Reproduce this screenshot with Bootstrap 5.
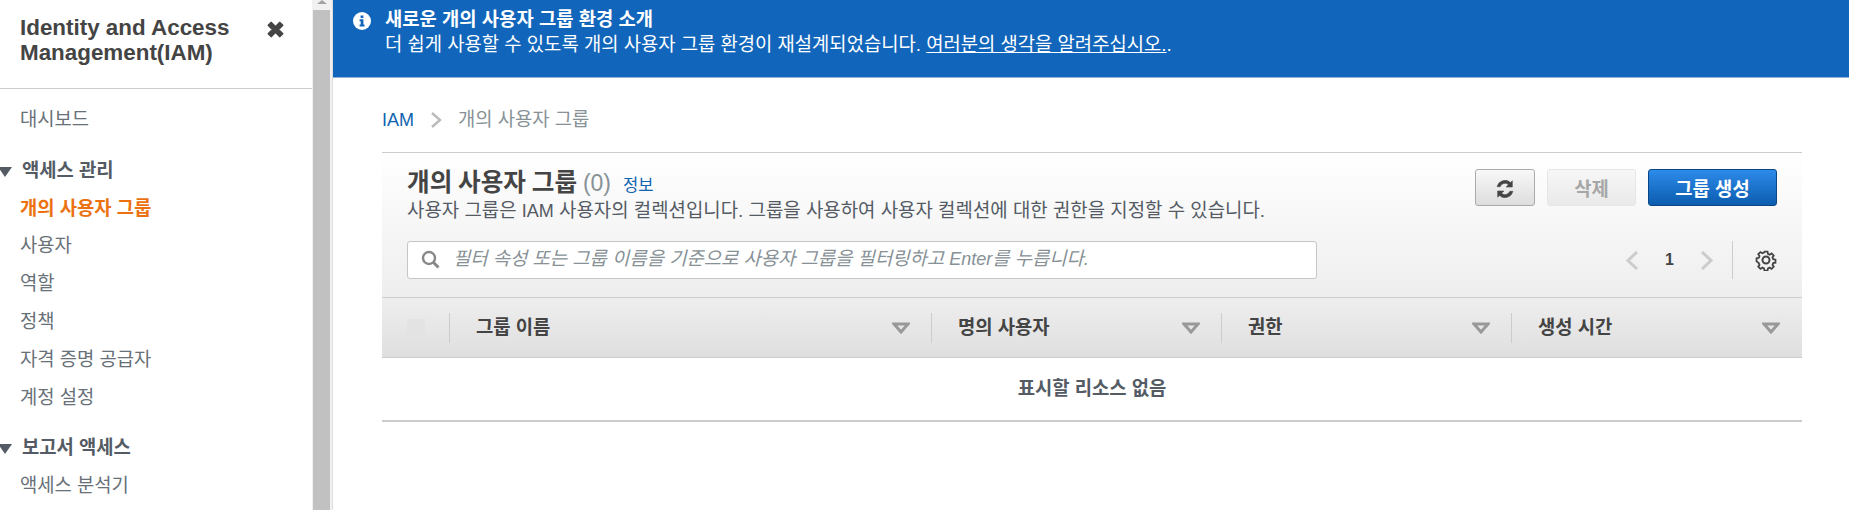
<!DOCTYPE html>
<html lang="ko">
<head>
    <meta charset="UTF-8">
    <meta name="viewport" content="width=device-width, initial-scale=1.0">
    <title>IAM - 개의 사용자 그룹</title>
    <link href="https://cdn.jsdelivr.net/npm/bootstrap@5.3.3/dist/css/bootstrap.min.css" rel="stylesheet">
    <script src="https://cdn.jsdelivr.net/npm/bootstrap@5.3.3/dist/js/bootstrap.bundle.min.js"></script>
    <style>
        html, body { height: 510px; overflow: hidden; }
        body { font-family: "Liberation Sans", "Noto Sans CJK KR", sans-serif; font-size: 18.8px; color: #444; background: #fff; }
        a { text-decoration: none; }
        .latin { font-size: 18px; }

        /* left nav */
        .side-nav { width: 312px; height: 510px; overflow: hidden; flex: none; }
        .side-head { height: 89px; border-bottom: 1px solid #ccc; padding: 15px 20px 0; }
        .side-title { font-size: 22.4px; line-height: 25px; font-weight: 700; color: #444; width: 240px; }
        .side-close { margin: 6px 8px 0 0; }
        .side-list { padding-top: 12px; }
        .side-item { height: 37.8px; line-height: 37.8px; padding-left: 20px; color: #687078; white-space: nowrap; }
        .side-item.on { color: #ec7211; font-weight: 700; }
        .side-group { height: 37.8px; color: #545b64; font-weight: 700; margin-top: 13px; gap: 8px; white-space: nowrap; }
        .side-tri { width: 0; height: 0; border-left: 7px solid transparent; border-right: 7px solid transparent; border-top: 10px solid #545b64; margin-left: -2px; margin-right: 2px; margin-top: 2px; }

        /* fake scrollbar */
        .scroll-track { width: 21px; flex: none; background: #f1f1f1; padding: 0 2px 0 1px; border-right: 1px solid #ddd; }
        .scroll-up { height: 10px; display: flex; justify-content: center; }
        .scroll-up i { width: 0; height: 0; border-left: 5px solid transparent; border-right: 5px solid transparent; border-bottom: 4px solid #a3a3a3; }
        .scroll-thumb { background: #c1c1c1; height: 500px; }

        /* main */
        .main-area { flex: 1 1 auto; min-width: 0; }
        .info-banner { height: 78px; background: #1166bb; border-bottom: 1px solid #8fb3d9; color: #fff; padding: 9px 0 0 20px; gap: 14px; }
        .info-banner svg { margin-top: 3px; }
        .info-banner strong { display: block; line-height: 22px; }
        .info-banner div div { line-height: 27px; }
        .info-banner a { color: #fff; text-decoration: underline; }
        .content-wrap { padding: 0 47px 0 49px; }
        .crumbs { height: 74px; gap: 16px; padding-top: 10px; color: #879196; }
        .crumbs a { color: #0f63b0; }

        .group-panel { border-top: 1px solid #ccc; }
        .panel-top { height: 145px; background: linear-gradient(#fff, #eee); padding: 16px 25px 0 25px; border-bottom: 1px solid #ccc; }
        .panel-title { font-size: 24.6px; font-weight: 700; line-height: 27px; color: #444; white-space: nowrap; word-spacing: -1px; }
        .panel-count { font-weight: 400; font-size: 23px; color: #879196; }
        .panel-info { font-size: 16.6px; font-weight: 400; color: #0f63b0; margin-left: 12px; }
        .panel-desc { font-size: 18.9px; line-height: 23px; white-space: nowrap; color: #545b64; }
        .tool-btn { height: 37px; border-radius: 3px; font-size: 18.8px; font-weight: 700; padding: 4px 0 0; line-height: 30px; }
        .btn-refresh { width: 60px; padding: 0; background: linear-gradient(#f8f8f8, #ddd); border: 1px solid #aaa; }
        .btn-del:disabled { width: 89px; background: linear-gradient(#f7f7f7, #e9e9e9); border: 1px solid #e6e6e6; color: #a6a6a6; opacity: 1; }
        .btn-make { width: 129px; background: linear-gradient(#2d8bea, #0b5cae); border: 1px solid #0a4585; color: #fff; }
        .search-row { margin-top: 18px; }
        .search-box { width: 910px; height: 38px; background: #fff; border: 1px solid #c6c6c6; border-radius: 3px; padding: 0 0 2px 13px; gap: 13px; }
        .search-box span { font-style: italic; color: #879196; white-space: nowrap; }
        .pager { height: 38px; margin-right: 0; }
        .pager-num { font-weight: 700; font-size: 16px; width: 19px; text-align: center; margin: 0 21px 0 21px; }
        .pager-sep { width: 1px; height: 38px; background: #ccc; margin: 0 22px 0 19px; }

        .head-row { height: 60px; background: linear-gradient(#eee, #dfdfdf); border-bottom: 1px solid #ccc; font-weight: 700; color: #444; }
        .head-cell { height: 30px; border-left: 1px solid #ccc; padding: 0 21px 0 26px; flex: 0 0 290px; line-height: 30px; white-space: nowrap; }
        .head-cell.wide { flex: 0 0 482px; }
        .head-check { flex: 0 0 67px; padding-left: 25px; }
        .head-check i { display: block; width: 18px; height: 18px; border-radius: 2px; background: #e3e3e3; }
        .sort-tri { width: 18px; height: 12px; }
        .empty-row { height: 64px; border-bottom: 2px solid #ccc; font-weight: 700; color: #545b64; }
    </style>
</head>
<body>

<div class="d-flex">
    <div class="side-nav">
        <div class="side-head d-flex justify-content-between">
            <div class="side-title">Identity and Access Management(IAM)</div>
            <svg class="side-close" width="17" height="17" viewBox="0 0 16 16"><path d="M1 4 4 1l4 4 4-4 3 3-4 4 4 4-3 3-4-4-4 4-3-3 4-4z" fill="#444" stroke="#444" stroke-linejoin="round"/></svg>
        </div>
        <div class="side-list">
            <div class="side-item">대시보드</div>
            <div class="side-group d-flex align-items-center"><i class="side-tri"></i>액세스 관리</div>
            <div class="side-item on">개의 사용자 그룹</div>
            <div class="side-item">사용자</div>
            <div class="side-item">역할</div>
            <div class="side-item">정책</div>
            <div class="side-item">자격 증명 공급자</div>
            <div class="side-item">계정 설정</div>
            <div class="side-group d-flex align-items-center"><i class="side-tri"></i>보고서 액세스</div>
            <div class="side-item">액세스 분석기</div>
        </div>
    </div>

    <div class="scroll-track">
        <div class="scroll-up"><i></i></div>
        <div class="scroll-thumb"></div>
    </div>

    <div class="main-area">
        <div class="info-banner d-flex">
            <svg width="18" height="18" viewBox="0 0 18 18" class="flex-none"><circle cx="9" cy="9" r="9" fill="#fff"/><path d="M7.6 3.4h2.8v2.5H7.6zM6.6 7.2h3.8v5.3h1.1v2.1H6.6v-2.1h1.1V9.3h-1.1z" fill="#1166bb"/></svg>
            <div>
                <strong>새로운 개의 사용자 그룹 환경 소개</strong>
                <div>더 쉽게 사용할 수 있도록 개의 사용자 그룹 환경이 재설계되었습니다. <a href="#">여러분의 생각을 알려주십시오.</a>.</div>
            </div>
        </div>

        <div class="content-wrap">
            <div class="crumbs d-flex align-items-center">
                <a href="#" class="latin">IAM</a>
                <svg width="12" height="18" viewBox="0 0 12 18"><path d="M2 2l8 7-8 7" fill="none" stroke="#bbb" stroke-width="2.4"/></svg>
                <span>개의 사용자 그룹</span>
            </div>

            <div class="group-panel">
                <div class="panel-top">
                    <div class="d-flex justify-content-between">
                        <div>
                            <div class="panel-title">개의 사용자 그룹 <span class="panel-count">(0)</span><a href="#" class="panel-info">정보</a></div>
                            <div class="panel-desc">사용자 그룹은 <span class="latin">IAM</span> 사용자의 컬렉션입니다. 그룹을 사용하여 사용자 컬렉션에 대한 권한을 지정할 수 있습니다.</div>
                        </div>
                        <div class="d-flex gap-2">
                            <button type="button" class="btn tool-btn btn-refresh">
                                <svg width="20" height="20" viewBox="0 0 18 18"><path d="M15.6 1.6v5.6H10l2.1-2.1A4.7 4.7 0 0 0 4.6 6.9H1.900A7.3 7.3 0 0 1 14 3.2zM2.400 16.400v-5.600H8l-2.100 2.100a4.700 4.700 0 0 0 7.500-1.800h2.700A7.300 7.300 0 0 1 4 14.800z" fill="#444" stroke="#444" stroke-width=".5"/></svg>
                            </button>
                            <button type="button" class="btn tool-btn btn-del ms-1" disabled>삭제</button>
                            <button type="button" class="btn tool-btn btn-make ms-1">그룹 생성</button>
                        </div>
                    </div>
                    <div class="search-row d-flex justify-content-between">
                        <div class="search-box d-flex align-items-center">
                            <svg width="19" height="19" viewBox="0 0 19 19"><circle cx="8" cy="8" r="6" fill="none" stroke="#888" stroke-width="2.4"/><path d="M12.5 12.5l5 5" stroke="#888" stroke-width="3"/></svg>
                            <span>필터 속성 또는 그룹 이름을 기준으로 사용자 그룹을 필터링하고 <span class="latin">Enter</span>를 누릅니다.</span>
                        </div>
                        <div class="pager d-flex align-items-center">
                            <svg width="13" height="21" viewBox="0 0 13 21"><path d="M11 2l-9 8.500 9 8.500" fill="none" stroke="#ccc" stroke-width="3"/></svg>
                            <span class="pager-num">1</span>
                            <svg width="13" height="21" viewBox="0 0 13 21"><path d="M2 2l9 8.500-9 8.500" fill="none" stroke="#ccc" stroke-width="3"/></svg>
                            <span class="pager-sep"></span>
                            <svg width="22" height="22" viewBox="0 0 22 22"><circle cx="11" cy="11" r="3.500" fill="none" stroke="#444" stroke-width="2"/><path d="M9.300 2h3.400l.5 2.500 1.900.8 2.100-1.400 2.400 2.400-1.400 2.100.8 1.900 2.500.5v3.400l-2.500.5-.8 1.900 1.400 2.100-2.400 2.400-2.100-1.400-1.900.8-.5 2.500H9.300l-.5-2.500-1.900-.8-2.100 1.400-2.400-2.400 1.400-2.100-.8-1.900L.5 12.700V9.300l2.500-.5.8-1.900-1.400-2.100 2.400-2.400 2.100 1.400 1.900-.8z" transform="translate(1.100 .900) scale(.9)" fill="none" stroke="#444" stroke-width="2"/></svg>
                        </div>
                    </div>
                </div>

                <div class="head-row d-flex align-items-center">
                    <div class="head-check"><i></i></div>
                    <div class="head-cell wide d-flex justify-content-between align-items-center"><span>그룹 이름</span><svg class="sort-tri" viewBox="0 0 18 12"><path d="M2 2h14L9 10z" fill="none" stroke="#999" stroke-width="3"/></svg></div>
                    <div class="head-cell d-flex justify-content-between align-items-center"><span>명의 사용자</span><svg class="sort-tri" viewBox="0 0 18 12"><path d="M2 2h14L9 10z" fill="none" stroke="#999" stroke-width="3"/></svg></div>
                    <div class="head-cell d-flex justify-content-between align-items-center"><span>권한</span><svg class="sort-tri" viewBox="0 0 18 12"><path d="M2 2h14L9 10z" fill="none" stroke="#999" stroke-width="3"/></svg></div>
                    <div class="head-cell d-flex justify-content-between align-items-center"><span>생성 시간</span><svg class="sort-tri" viewBox="0 0 18 12"><path d="M2 2h14L9 10z" fill="none" stroke="#999" stroke-width="3"/></svg></div>
                </div>
                <div class="empty-row d-flex align-items-center justify-content-center">표시할 리소스 없음</div>
            </div>
        </div>
    </div>
</div>

</body>
</html>
